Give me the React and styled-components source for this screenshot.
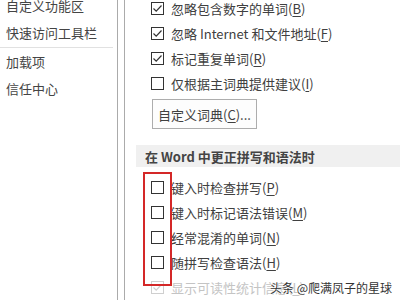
import React from 'react';
import styled, { createGlobalStyle } from 'styled-components';

const Global = createGlobalStyle`
  html, body { margin: 0; padding: 0; background: #ffffff; }
  body { font-family: "Noto Sans CJK SC", "Noto Sans", sans-serif; }
`;

const Window = styled.div`
  position: relative;
  width: 400px;
  height: 300px;
  overflow: hidden;
  display: flex;
  background: #ffffff;
  color: #444444;
`;

const Nav = styled.div`
  width: 117px;
  flex-shrink: 0;
  border-right: 1px solid #ababab;
  display: flex;
  flex-direction: column;
  margin-top: -8px;
`;

const NavItem = styled.div`
  height: 27px;
  line-height: 27px;
  padding-left: 6px;
  font-size: 13px;
  color: #444444;
  white-space: nowrap;
`;

const NavDivider = styled.div`
  height: 1px;
  background: #e1e1e1;
  margin: 1px 4px 0 0;
`;

const Gap = styled.div`
  width: 6px;
  flex-shrink: 0;
`;

const Content = styled.div`
  flex: 1;
  border-left: 1px solid #ababab;
  display: flex;
  flex-direction: column;
  margin-top: -4px;
`;

const Row = styled.div`
  height: 25px;
  display: flex;
  align-items: center;
  padding-left: 26px;
  font-size: 13px;
  white-space: nowrap;
  color: ${p => (p.disabled ? '#c4c4c4' : '#404040')};
`;

const Label = styled.span`
  margin-left: 7px;
  u { text-decoration: underline; text-underline-offset: 2px; }
`;

const Button = styled.div`
  margin: 3px 0 0 27px;
  width: 103px;
  height: 28px;
  border: 1px solid #adadad;
  background: #fdfdfd;
  display: flex;
  align-items: center;
  justify-content: center;
  font-size: 13px;
  color: #404040;
  u { text-decoration: underline; text-underline-offset: 2px; }
`;

const Section = styled.div`
  margin: 16px 0 0 11px;
  height: 22px;
  background: #f0f0f0;
  display: flex;
  align-items: center;
  padding-left: 9px;
  font-size: 13px;
  font-weight: 700;
  color: #444444;
  white-space: nowrap;
`;

const Group = styled.div`
  position: relative;
  margin-top: 8px;
`;

const Highlight = styled.div`
  position: absolute;
  left: 18px;
  top: -3px;
  width: 25px;
  height: 110px;
  border: 2px solid #d42828;
`;

const Watermark = styled.div`
  position: absolute;
  right: 8px;
  bottom: 4px;
  font-size: 12px;
  color: #333333;
  text-shadow: 0 0 2px #ffffff, 0 0 2px #ffffff;
  white-space: nowrap;
`;

const Check = ({ checked, disabled }) => (
  <svg width="13" height="13" viewBox="0 0 13 13">
    <rect x="0.5" y="0.5" width="12" height="12" fill="#fff" stroke={disabled ? '#cfcfcf' : '#333'} />
    {checked && (
      <path d="M2.5 6.5 L5.2 9.2 L10.5 3.5" fill="none" stroke={disabled ? '#cfcfcf' : '#333'} strokeWidth="1.2" />
    )}
  </svg>
);

const Option = ({ checked, disabled, text, hot }) => (
  <Row disabled={disabled}>
    <Check checked={checked} disabled={disabled} />
    <Label>
      {text}(<u>{hot}</u>)
    </Label>
  </Row>
);

export default function App() {
  return (
    <>
      <Global />
      <Window>
        <Nav>
          <NavItem>自定义功能区</NavItem>
          <NavItem>快速访问工具栏</NavItem>
          <NavDivider />
          <NavItem>加载项</NavItem>
          <NavItem>信任中心</NavItem>
        </Nav>
        <Gap />
        <Content>
          <Option checked text="忽略包含数字的单词" hot="B" />
          <Option checked text="忽略 Internet 和文件地址" hot="F" />
          <Option checked text="标记重复单词" hot="R" />
          <Option text="仅根据主词典提供建议" hot="I" />
          <Button>
            自定义词典(<u>C</u>)...
          </Button>
          <Section>在 Word 中更正拼写和语法时</Section>
          <Group>
            <Highlight />
            <Option text="键入时检查拼写" hot="P" />
            <Option text="键入时标记语法错误" hot="M" />
            <Option text="经常混淆的单词" hot="N" />
            <Option text="随拼写检查语法" hot="H" />
            <Option checked disabled text="显示可读性统计信息" hot="L" />
          </Group>
        </Content>
        <Watermark>头条 @爬满凤子的星球</Watermark>
      </Window>
    </>
  );
}
